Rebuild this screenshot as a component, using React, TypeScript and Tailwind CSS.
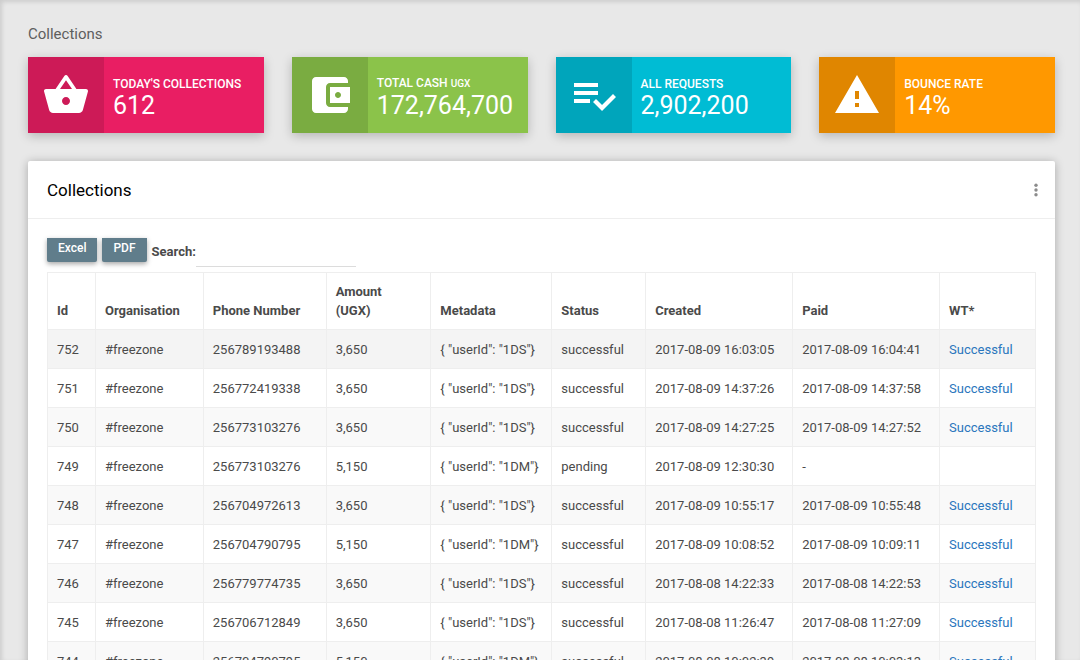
import type { ReactNode } from "react";

type Stat = {
  label: string;
  unit?: string;
  value: string;
  box: string;
  side: string;
  path: string;
};

const stats: Stat[] = [
  {
    label: "TODAY'S COLLECTIONS",
    value: "612",
    box: "bg-[#e91e63]",
    side: "bg-[#cd1a57]",
    path: "M17.21 9l-4.38-6.56c-.19-.28-.51-.42-.83-.42-.32 0-.64.14-.83.43L6.79 9H2c-.55 0-1 .45-1 1 0 .09.01.18.04.27l2.54 9.27c.23.84 1 1.46 1.92 1.46h13c.92 0 1.69-.62 1.93-1.46l2.54-9.27L23 10c0-.55-.45-1-1-1h-4.79zM9 9l3-4.4L15 9H9zm3 8c-1.1 0-2-.9-2-2s.9-2 2-2 2 .9 2 2-.9 2-2 2z",
  },
  {
    label: "TOTAL CASH",
    unit: "UGX",
    value: "172,764,700",
    box: "bg-[#8bc34a]",
    side: "bg-[#7aac41]",
    path: "M21 18v1c0 1.1-.9 2-2 2H5c-1.11 0-2-.9-2-2V5c0-1.1.89-2 2-2h14c1.1 0 2 .9 2 2v1h-9c-1.11 0-2 .9-2 2v8c0 1.1.89 2 2 2h9zm-9-2h10V8H12v8zm4-2.5c-.83 0-1.5-.67-1.5-1.5s.67-1.5 1.5-1.5 1.5.67 1.5 1.5-.67 1.5-1.5 1.5z",
  },
  {
    label: "ALL REQUESTS",
    value: "2,902,200",
    box: "bg-[#00bcd4]",
    side: "bg-[#00a5bb]",
    path: "M14 10H2v2h12v-2zm0-4H2v2h12V6zM2 16h8v-2H2v2zm19.5-4.5L23 13l-6.99 7-4.51-4.5L13 14l3.01 3 5.49-5.5z",
  },
  {
    label: "BOUNCE RATE",
    value: "14%",
    box: "bg-[#ff9800]",
    side: "bg-[#e08600]",
    path: "M1 21h22L12 2 1 21zm12-3h-2v-2h2v2zm0-4h-2v-4h2v4z",
  },
];

const rows = [
  ["752", "256789193488", "3,650", "1DS", "successful", "2017-08-09 16:03:05", "2017-08-09 16:04:41"],
  ["751", "256772419338", "3,650", "1DS", "successful", "2017-08-09 14:37:26", "2017-08-09 14:37:58"],
  ["750", "256773103276", "3,650", "1DS", "successful", "2017-08-09 14:27:25", "2017-08-09 14:27:52"],
  ["749", "256773103276", "5,150", "1DM", "pending", "2017-08-09 12:30:30", "-"],
  ["748", "256704972613", "3,650", "1DS", "successful", "2017-08-09 10:55:17", "2017-08-09 10:55:48"],
  ["747", "256704790795", "5,150", "1DM", "successful", "2017-08-09 10:08:52", "2017-08-09 10:09:11"],
  ["746", "256779774735", "3,650", "1DS", "successful", "2017-08-08 14:22:33", "2017-08-08 14:22:53"],
  ["745", "256706712849", "3,650", "1DS", "successful", "2017-08-08 11:26:47", "2017-08-08 11:27:09"],
  ["744", "256704790795", "5,150", "1DM", "successful", "2017-08-08 10:02:39", "2017-08-08 10:03:13"],
];

const headings = ["Id", "Organisation", "Phone Number", "Amount (UGX)", "Metadata", "Status", "Created", "Paid", "WT*"];

function StatCard({ stat }: { stat: Stat }) {
  return (
    <section className={`flex h-[76px] text-white shadow-[0_3px_10px_rgba(0,0,0,0.22)] ${stat.box}`}>
      <div className={`flex w-[76px] shrink-0 items-center justify-center ${stat.side}`}>
        <svg viewBox="0 0 24 24" className="size-12 fill-current" aria-hidden="true">
          <path d={stat.path} />
        </svg>
      </div>
      <div className="flex flex-col justify-center px-[9px] pt-[5px] whitespace-nowrap">
        <h2 className="text-xs leading-4 font-medium">
          {stat.label} {stat.unit && <small className="text-[10px]">{stat.unit}</small>}
        </h2>
        <p className="text-[25px] leading-7">{stat.value}</p>
      </div>
    </section>
  );
}

function ExportButton({ children }: { children: ReactNode }) {
  return (
    <button
      type="button"
      className="h-6 rounded-b-xs bg-[#607d8b] px-[11px] pb-1 text-xs leading-5 font-medium text-white shadow-[0_2px_5px_rgba(0,0,0,0.35)]"
    >
      {children}
    </button>
  );
}

function Cell({ children }: { children?: ReactNode }) {
  return <td className="border border-[#eeeeee] px-[9px]">{children}</td>;
}

export default function App() {
  return (
    <main className="h-screen overflow-hidden bg-[#e8e8e8] pt-6 pr-[25px] pl-7 font-[Roboto,sans-serif] text-[13px] text-[#4a4a4a] shadow-[inset_2px_2px_4px_rgba(0,0,0,0.12)]">
      <h1 className="mb-[13px] text-[15px] leading-5 text-[#5e5e5e]">Collections</h1>

      <div className="grid grid-cols-4 gap-7">
        {stats.map((stat) => (
          <StatCard key={stat.label} stat={stat} />
        ))}
      </div>

      <section className="mt-7 rounded-t-xs bg-white shadow-[0_1px_10px_rgba(0,0,0,0.28)]">
        <header className="flex h-[58px] items-center justify-between border-b border-[#eeeeee] pr-[10px] pl-[19px]">
          <h2 className="text-[17px] leading-6 text-black">Collections</h2>
          <button type="button" aria-label="More options" className="flex size-[18px] items-center justify-center text-[#8c8c8c]">
            <svg viewBox="0 0 18 18" className="size-[18px] fill-current" aria-hidden="true">
              <circle cx="9" cy="4.3" r="1.7" />
              <circle cx="9" cy="9" r="1.7" />
              <circle cx="9" cy="13.7" r="1.7" />
            </svg>
          </button>
        </header>

        <div className="px-[19px] pt-[19px]">
          <div className="flex items-start gap-[5px]">
            <ExportButton>Excel</ExportButton>
            <ExportButton>PDF</ExportButton>
            <div className="flex">
              <label htmlFor="search" className="pt-1 font-bold leading-5">
                Search:
              </label>
              <input id="search" type="search" className="h-[29px] w-40 border-b border-[#dcdcdc] outline-none" />
            </div>
          </div>

          <table className="mt-[5px] w-full border-collapse leading-[19px] whitespace-nowrap">
            <colgroup>
              <col className="w-[48px]" />
              <col className="w-[108px]" />
              <col className="w-[123px]" />
              <col className="w-[105px]" />
              <col className="w-[121px]" />
              <col className="w-[94px]" />
              <col className="w-[147px]" />
              <col className="w-[147px]" />
              <col className="w-[96px]" />
            </colgroup>
            <thead>
              <tr className="h-[57px]">
                {headings.map((heading) => (
                  <th
                    key={heading}
                    scope="col"
                    className="border border-[#eeeeee] px-[9px] pb-[9px] text-left align-bottom font-bold whitespace-normal"
                  >
                    {heading === "Amount (UGX)" ? (
                      <>
                        Amount
                        <br />
                        (UGX)
                      </>
                    ) : (
                      heading
                    )}
                  </th>
                ))}
              </tr>
            </thead>
            <tbody>
              {rows.map(([id, phone, amount, user, status, created, paid], index) => (
                <tr key={id} className={`h-[39px] ${index === 0 ? "bg-[#f4f4f4]" : "odd:bg-[#f9f9f9]"}`}>
                  <Cell>{id}</Cell>
                  <Cell>#freezone</Cell>
                  <Cell>{phone}</Cell>
                  <Cell>{amount}</Cell>
                  <Cell>{`{ "userId": "${user}"}`}</Cell>
                  <Cell>{status}</Cell>
                  <Cell>{created}</Cell>
                  <Cell>{paid}</Cell>
                  <Cell>
                    {status === "successful" && (
                      <a href="#" className="text-[#2a76bd]">
                        Successful
                      </a>
                    )}
                  </Cell>
                </tr>
              ))}
            </tbody>
          </table>
        </div>
      </section>
    </main>
  );
}
